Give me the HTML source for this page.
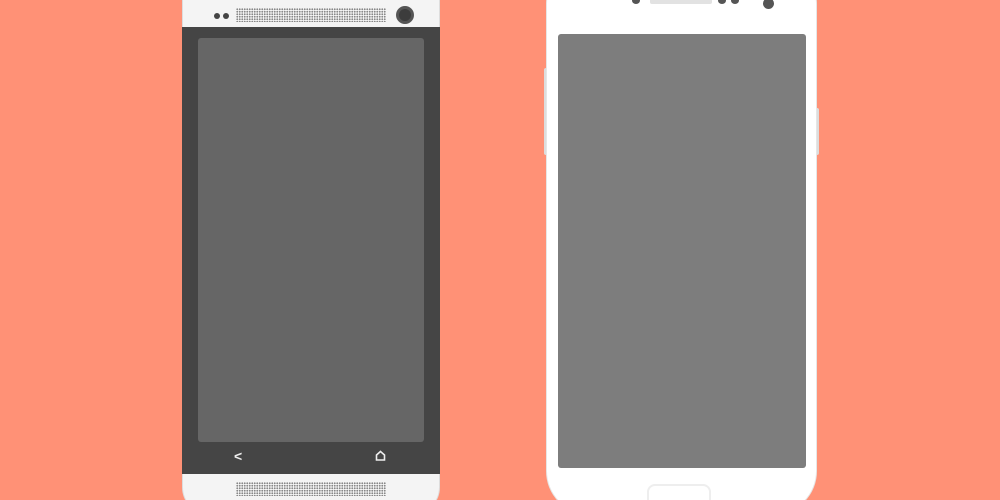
<!DOCTYPE html>
<html style="overflow:hidden;height:500px"><head><style>
html,body{margin:0;width:1000px;height:500px;overflow:hidden}
body{background:#ff9176;position:relative}
div{position:absolute;box-sizing:border-box}
.grill{background-image:radial-gradient(circle,#888 0.8px,transparent 1.1px);background-size:2.5px 2.5px}
</style></head><body>
<!-- HTC -->
<div style="left:182px;top:-30px;width:258px;height:545px;background:#f4f4f4;border-radius:28px;border:1px solid #ddd"></div>
<div style="left:182px;top:27px;width:258px;height:447px;background:#454545"></div>
<div style="left:198px;top:38px;width:226px;height:404px;background:#666;border-radius:3px"></div>
<div style="left:214px;top:13px;width:6px;height:6px;border-radius:50%;background:#444"></div>
<div style="left:223px;top:13px;width:6px;height:6px;border-radius:50%;background:#444"></div>
<div class="grill" style="left:236px;top:8px;width:150px;height:14px"></div>
<div style="left:396px;top:6px;width:18px;height:18px;border-radius:50%;background:#3c3c3c;border:3px solid #555"></div>
<div class="grill" style="left:236px;top:482px;width:150px;height:14px"></div>
<div style="left:234px;top:448px;color:#eee;font:bold 14px 'Liberation Sans',sans-serif">&lt;</div>
<svg style="position:absolute;left:375px;top:450px" width="11" height="11" viewBox="0 0 11 11"><path d="M1.5 10V5L5.5 1.5 9.5 5V10Z" fill="none" stroke="#eee" stroke-width="1.6"/></svg>
<!-- Samsung -->
<div style="left:544px;top:68px;width:4px;height:87px;background:#ddd;border-radius:2px"></div>
<div style="left:815px;top:108px;width:4px;height:47px;background:#ddd;border-radius:2px"></div>
<div style="left:546px;top:-40px;width:271px;height:555px;background:#fff;border-radius:44px;border:1px solid #e6e6e6"></div>
<div style="left:558px;top:34px;width:248px;height:434px;background:#7d7d7d;border-radius:3px"></div>
<div style="left:650px;top:-2px;width:62px;height:6px;background:#e2e2e2;border-radius:2px"></div>
<div style="left:632px;top:-3px;width:8px;height:7px;border-radius:50%;background:#555"></div>
<div style="left:718px;top:-3px;width:8px;height:7px;border-radius:50%;background:#555"></div>
<div style="left:731px;top:-3px;width:8px;height:7px;border-radius:50%;background:#555"></div>
<div style="left:763px;top:-2px;width:11px;height:11px;border-radius:50%;background:#555"></div>
<div style="left:647px;top:484px;width:64px;height:30px;border:2px solid #eee;border-radius:8px;background:#fff"></div>
</body></html>
